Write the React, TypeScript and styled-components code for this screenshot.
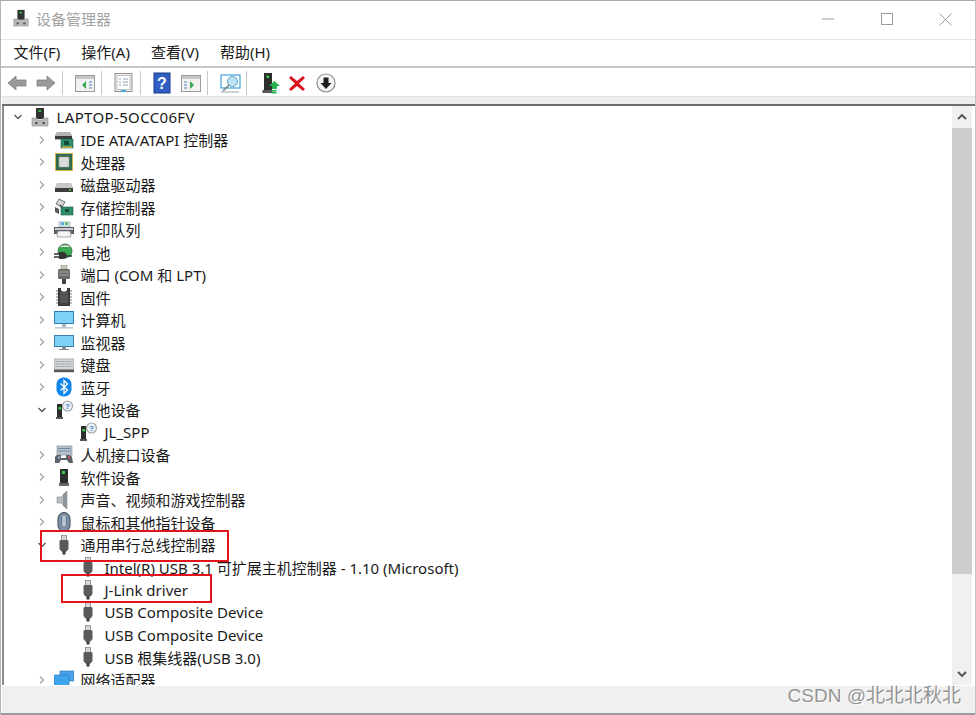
import React from "react";
import styled, { createGlobalStyle } from "styled-components";

const GlobalStyle = createGlobalStyle`
  html, body { margin: 0; padding: 0; background: #fff; }
  body { font-family: "Noto Sans", "Noto Sans CJK SC", sans-serif; color: #1a1a1a; }
  * { box-sizing: border-box; }
`;

const Window = styled.div`
  position: relative;
  width: 976px;
  height: 715px;
  overflow: hidden;
  display: flex;
  flex-direction: column;
  background: #fff;
  border-top: 1px solid #a9a9a9;
  border-left: 1px solid #b5b5b5;
  border-right: 1px solid #c4c4c4;
`;

const TitleBar = styled.div`
  height: 39px;
  flex: none;
  display: flex;
  align-items: center;
  padding: 0 0 4px 11px;
  border-bottom: 1px solid #e6e6e6;
`;

const TitleIcon = styled.div`
  width: 18px;
  height: 18px;
  flex: none;
  margin-right: 6px;
`;

const TitleText = styled.div`
  font-size: 15px;
  color: #a3a3a3;
  flex: 1;
`;

const WinButton = styled.div`
  width: 59px;
  height: 36px;
  margin-top: 2px;
  display: flex;
  align-items: center;
  justify-content: center;
`;

const MenuBar = styled.div`
  height: 28px;
  flex: none;
  display: flex;
  align-items: center;
  padding: 0 0 3px 12.5px;
  gap: 21px;
  font-size: 15px;
  border-bottom: 2px solid #c4c7cc;
`;

const Toolbar = styled.div`
  height: 28px;
  flex: none;
  display: flex;
  align-items: center;
  padding: 2px 0 0 5px;
`;

const ToolIcon = styled.div<{ $w: number; $ml?: number }>`
  width: ${(p) => p.$w}px;
  height: 22px;
  flex: none;
  margin-left: ${(p) => p.$ml ?? 0}px;
`;

const ToolSep = styled.div<{ $ml: number }>`
  width: 1px;
  height: 24px;
  flex: none;
  margin-left: ${(p) => p.$ml}px;
  background: #c9c9c9;
`;

const GreyStrip = styled.div`
  height: 10px;
  flex: none;
  background: #eeeeee;
  border-top: 1px solid #e4e4e4;
  border-bottom: 2px solid #6d6d6d;
  margin-left: 1px;
`;

const Content = styled.div`
  flex: 1;
  min-height: 0;
  display: flex;
  margin-left: 1px;
  margin-right: 3px;
  border-left: 2px solid #8c8c8c;
`;

const Tree = styled.div`
  flex: 1;
  min-width: 0;
  overflow: hidden;
  display: grid;
  grid-auto-rows: 22.5px;
`;

const Row = styled.div<{ $level: number }>`
  display: flex;
  align-items: center;
  height: 22.5px;
  padding-left: ${(p) => 6.5 + p.$level * 24}px;
  font-size: 15px;
  white-space: nowrap;
  letter-spacing: ${(p) => (p.$level === 0 ? "0.35px" : "0")};
`;

const Chevron = styled.div`
  width: 14px;
  height: 14px;
  flex: none;
  display: flex;
  align-items: center;
  justify-content: center;
`;

const RowIcon = styled.div`
  width: 20px;
  height: 20px;
  flex: none;
  margin-left: 5.5px;
  margin-right: 6.5px;
`;

const Scrollbar = styled.div`
  width: 20px;
  flex: none;
  background: #f0f0f0;
  display: flex;
  flex-direction: column;
`;

const ScrollBtn = styled.div`
  height: 22px;
  flex: none;
  display: flex;
  align-items: center;
  justify-content: center;
`;

const Thumb = styled.div`
  height: 446px;
  flex: none;
  background: #cdcdcd;
`;

const ScrollGap = styled.div`
  flex: 1;
`;

const StatusBar = styled.div`
  height: 28px;
  flex: none;
  background: #f0f0f0;
  border-top: 1px solid #fff;
  margin-left: 1px;
`;

const BottomEdge = styled.div`
  height: 2px;
  flex: none;
  background: #9a9a9a;
`;

const RedBox = styled.div<{ $l: number; $t: number; $w: number; $h: number }>`
  position: absolute;
  left: ${(p) => p.$l}px;
  top: ${(p) => p.$t}px;
  width: ${(p) => p.$w}px;
  height: ${(p) => p.$h}px;
  border: 2px solid #e3131b;
`;

const Watermark = styled.div`
  position: absolute;
  right: 14px;
  top: 679px;
  font-family: "Liberation Sans", "Noto Sans CJK SC", sans-serif;
  font-size: 19px;
  color: #949494;
  text-shadow: 1px 1px 0 #fff;
  white-space: nowrap;
`;

const icon = (body: React.ReactNode, vb = "0 0 20 20") => (
  <svg width="100%" height="100%" viewBox={vb} style={{ display: "block" }}>
    {body}
  </svg>
);

const pc = icon(
  <>
    <rect x="6" y="1" width="8" height="11" fill="#333" />
    <rect x="8.5" y="3" width="2.5" height="2" fill="#33c24d" />
    <path d="M2 11h5v2h6v-2h5v8H2z" fill="#b9b9b9" stroke="#8e8e8e" strokeWidth=".6" />
    <rect x="5" y="15" width="2.5" height="2" fill="#555" />
    <rect x="12.5" y="15" width="2.5" height="2" fill="#555" />
  </>
);

const ide = icon(
  <>
    <path d="M1 5l2-3h13l2 3v5H1z" fill="#b4b4b4" />
    <rect x="1" y="6" width="17" height="3" fill="#3b3b3b" />
    <rect x="7" y="9" width="12" height="9" fill="#2f8f6b" stroke="#1d5e48" strokeWidth=".6" />
    <rect x="10" y="11" width="5" height="4" fill="#184a3a" />
    <rect x="8" y="16.5" width="10" height="1.5" fill="#d0aa40" />
  </>
);

const cpu = icon(
  <>
    <rect x="1" y="1" width="18" height="18" fill="#d6b24f" />
    <rect x="2" y="2" width="16" height="16" fill="#2f6a4b" />
    <rect x="5" y="5" width="10" height="10" fill="#d9dcd9" stroke="#9fa8a2" strokeWidth=".6" />
  </>
);

const disk = icon(
  <>
    <path d="M3 8h14l2 4v5H1v-5z" fill="#c6c6c6" />
    <rect x="1" y="13" width="18" height="4" fill="#3c3c3c" />
    <rect x="15" y="14" width="2" height="1.5" fill="#50d060" />
  </>
);

const storage = icon(
  <>
    <path d="M5 2l6 3-3 5-6-3z" fill="#d5d5d5" stroke="#555" strokeWidth=".8" />
    <path d="M1 10l4 2v5l-4-2z" fill="#555" />
    <path d="M6 8l3 3" stroke="#444" strokeWidth="1.2" />
    <rect x="7" y="10" width="12" height="8" fill="#2f8f6b" stroke="#1d5e48" strokeWidth=".6" />
    <rect x="11" y="12" width="4" height="3" fill="#184a3a" />
  </>
);

const printer = icon(
  <>
    <rect x="5" y="2" width="11" height="5" fill="#dfe9f2" stroke="#888" strokeWidth=".6" />
    <rect x="7" y="2.5" width="3" height="2.5" fill="#3fa9e0" />
    <rect x="11" y="2.5" width="3" height="2.5" fill="#4fc060" />
    <path d="M0 7h20v7h-3l-1-3H4l-1 3H0z" fill="#5a5f66" />
    <rect x="1" y="8" width="18" height="2" fill="#c8ccd0" />
    <path d="M4 11h12l1 6H3z" fill="#f4f4f4" stroke="#777" strokeWidth=".6" />
  </>
);

const battery = icon(
  <>
    <circle cx="11" cy="9" r="7" fill="#3aaa50" stroke="#2a6d3c" strokeWidth=".8" />
    <path d="M5 5a7 4 0 0 1 12 0" fill="#e6e6e6" stroke="#888" strokeWidth=".6" />
    <path d="M0 12h5M0 15h5" stroke="#333" strokeWidth="1.4" />
    <path d="M5 10h4a3 3 0 0 1 0 7H5z" fill="#333" />
    <path d="M11 14h7" stroke="#333" strokeWidth="1.5" />
  </>
);

const port = icon(
  <>
    <rect x="7" y="0" width="6" height="4" fill="#c9c9b8" stroke="#888" strokeWidth=".5" />
    <rect x="4" y="4" width="12" height="10" rx="1.5" fill="#6b6b6b" />
    <path d="M5 7h10M5 10h10" stroke="#a9a9a9" strokeWidth="1" />
    <rect x="8" y="14" width="4" height="5" fill="#444" />
  </>
);

const firmware = icon(
  <>
    <path d="M4 1h3v1.5a3 2 0 0 0 6 0V1h3v18H4z" fill="#3d3d3d" />
    <path d="M2 4h2M2 7h2M2 10h2M2 13h2M2 16h2M16 4h2M16 7h2M16 10h2M16 13h2M16 16h2" stroke="#777" strokeWidth="1.2" />
    <rect x="6" y="5" width="8" height="11" fill="#555" />
  </>
);

const computer = icon(
  <>
    <rect x="0" y="1" width="20" height="13" fill="#2f7fb5" />
    <rect x="1" y="2" width="18" height="11" fill="#7fd0f5" />
    <rect x="8" y="14" width="4" height="3" fill="#aab4bc" />
    <rect x="1" y="17" width="18" height="1.6" fill="#c3ccd3" />
  </>
);

const monitor = icon(
  <>
    <rect x="0" y="3" width="20" height="12" fill="#3a7da8" />
    <rect x="1" y="4" width="18" height="10" fill="#7fd0f5" />
    <rect x="8" y="15" width="4" height="2" fill="#8a939a" />
    <rect x="5" y="17" width="10" height="1" fill="#7b8288" />
  </>
);

const keyboard = icon(
  <>
    <rect x="0" y="4" width="20" height="13" fill="#d4d6d8" stroke="#8a8a8a" strokeWidth=".6" />
    <path d="M1.5 6.5h17M1.5 9h17M1.5 11.5h17" stroke="#9a9da0" strokeWidth="1.2" strokeDasharray="1.3 .5" />
    <rect x="0" y="14.5" width="20" height="2.5" fill="#55585c" />
  </>
);

const bluetooth = icon(
  <>
    <rect x="2.5" y="0.5" width="15" height="19" rx="7" fill="#0f86ee" />
    <path d="M6.5 6.5l7 6.5-3.5 3.5V3.500l3.500 3.500-7 6.500" fill="none" stroke="#fff" strokeWidth="1.3" />
  </>
);

const other = icon(
  <>
    <path d="M3 4h5v13H3z" fill="#2e2e2e" />
    <path d="M2 17h7v2H2z" fill="#555" />
    <rect x="4.500" y="7" width="2.500" height="2.500" fill="#33d14d" />
    <circle cx="13.500" cy="6" r="5" fill="#eef3f8" stroke="#a5a5a5" strokeWidth="1.200" />
    <text x="13.500" y="8.800" fontSize="8" fontWeight="700" textAnchor="middle" fill="#3a7fc5" fontFamily="Liberation Sans, sans-serif">?</text>
  </>
);

const hid = icon(
  <>
    <rect x="3" y="1" width="15" height="9" fill="#b9c2cc" stroke="#7d8893" strokeWidth=".6" />
    <path d="M4.500 3.500h12M4.500 6h12" stroke="#4a6f95" strokeWidth="1.200" strokeDasharray="1.300 .6" />
    <path d="M1 12a3 3 0 0 1 3-2h3v3h5v-3h3a3 3 0 0 1 3 2l1 6h-4l-2-3H7l-2 3H1z" fill="#5d6167" />
    <circle cx="15" cy="12" r="1.200" fill="#c85a5a" />
    <circle cx="5" cy="12.500" r="1.200" fill="#8fb3d4" />
  </>
);

const software = icon(
  <>
    <rect x="6" y="2" width="8" height="14" fill="#2e2e2e" />
    <rect x="5" y="16" width="10" height="3" fill="#666" />
    <rect x="8" y="4" width="3" height="3" fill="#33d14d" />
  </>
);

const sound = icon(
  <>
    <path d="M3 7h4l6-6v18l-6-6H3z" fill="#b8bcc0" stroke="#8a8e92" strokeWidth=".6" />
    <path d="M9 4l4-3v18l-4-3z" fill="#8f9499" />
  </>
);

const mouse = icon(
  <>
    <rect x="4" y="0.500" width="12" height="19" rx="6" fill="#7e92ab" stroke="#3b4654" strokeWidth="1" />
    <rect x="7.500" y="2.500" width="5" height="13" rx="2.500" fill="#b4c0cf" stroke="#4c5868" strokeWidth=".6" />
  </>
);

const usb = icon(
  <>
    <rect x="7.500" y="0.500" width="5" height="5" fill="#d5d5d5" stroke="#7d7d7d" strokeWidth=".7" />
    <path d="M5.500 6a1.500 1.500 0 0 1 1.500-1h6a1.500 1.500 0 0 1 1.500 1v8l-2 2.500h-5l-2-2.500z" fill="#5a5a5a" />
    <rect x="8.500" y="16" width="3" height="3.500" fill="#3b3b3b" />
  </>
);

const network = icon(
  <>
    <rect x="6" y="1" width="14" height="10" fill="#4aa3e8" stroke="#2a70ad" strokeWidth=".6" />
    <rect x="0" y="5" width="15" height="12" fill="#3fa4ee" stroke="#1f74ba" strokeWidth=".6" />
  </>
);

type RowData = { level: number; label: string; icon: React.ReactNode; open?: boolean; leaf?: boolean };

const rows: RowData[] = [
  { level: 0, label: "LAPTOP-5OCC06FV", icon: pc, open: true },
  { level: 1, label: "IDE ATA/ATAPI 控制器", icon: ide },
  { level: 1, label: "处理器", icon: cpu },
  { level: 1, label: "磁盘驱动器", icon: disk },
  { level: 1, label: "存储控制器", icon: storage },
  { level: 1, label: "打印队列", icon: printer },
  { level: 1, label: "电池", icon: battery },
  { level: 1, label: "端口 (COM 和 LPT)", icon: port },
  { level: 1, label: "固件", icon: firmware },
  { level: 1, label: "计算机", icon: computer },
  { level: 1, label: "监视器", icon: monitor },
  { level: 1, label: "键盘", icon: keyboard },
  { level: 1, label: "蓝牙", icon: bluetooth },
  { level: 1, label: "其他设备", icon: other, open: true },
  { level: 2, label: "JL_SPP", icon: other, leaf: true },
  { level: 1, label: "人机接口设备", icon: hid },
  { level: 1, label: "软件设备", icon: software },
  { level: 1, label: "声音、视频和游戏控制器", icon: sound },
  { level: 1, label: "鼠标和其他指针设备", icon: mouse },
  { level: 1, label: "通用串行总线控制器", icon: usb, open: true },
  { level: 2, label: "Intel(R) USB 3.1 可扩展主机控制器 - 1.10 (Microsoft)", icon: usb, leaf: true },
  { level: 2, label: "J-Link driver", icon: usb, leaf: true },
  { level: 2, label: "USB Composite Device", icon: usb, leaf: true },
  { level: 2, label: "USB Composite Device", icon: usb, leaf: true },
  { level: 2, label: "USB 根集线器(USB 3.0)", icon: usb, leaf: true },
  { level: 1, label: "网络适配器", icon: network },
];

const arrow = (dir: "l" | "r") =>
  icon(
    <path
      d={dir === "l" ? "M1 11l8-7v4h10v6H9v4z" : "M19 11l-8-7v4H1v6h10v4z"}
      fill="#9a9a9a"
      stroke="#7d7d7d"
      strokeWidth=".8"
    />,
    "0 0 20 22"
  );

const panel = (right: boolean) =>
  icon(
    <>
      <rect x="0.500" y="3.500" width="19" height="16" fill="#f2f2f2" stroke="#9b9b9b" />
      <rect x="1" y="4" width="18" height="3" fill="#c4c8cc" />
      <path d={right ? "M3 10h3M3 13h3M3 16h3" : "M14 10h3M14 13h3M14 16h3"} stroke="#4f86bd" strokeWidth="1.200" />
      <path d={right ? "M9 9l4 4-4 4z" : "M11 9l-4 4 4 4z"} fill="#34a853" />
    </>,
    "0 0 20 22"
  );

const Toolbuttons = () => (
  <>
    <ToolIcon $w={20} $ml={1}>{arrow("l")}</ToolIcon>
    <ToolIcon $w={20} $ml={9}>{arrow("r")}</ToolIcon>
    <ToolSep $ml={6} />
    <ToolIcon $w={20} $ml={12}>{panel(false)}</ToolIcon>
    <ToolSep $ml={6} />
    <ToolIcon $w={20} $ml={12}>
      {icon(
        <>
          <rect x="1" y="1.500" width="17" height="18" fill="#f0f0f0" stroke="#8f8f8f" />
          <rect x="3" y="3.500" width="13" height="14" fill="#fff" stroke="#c0c0c0" />
          <path d="M5 7h2M9 7h5M5 10h2M9 10h5M5 13h2M9 13h5" stroke="#8aa0b5" />
          <rect x="7" y="18" width="5" height="2" fill="#3fa9e0" />
        </>,
        "0 0 20 22"
      )}
    </ToolIcon>
    <ToolSep $ml={6} />
    <ToolIcon $w={18} $ml={12}>
      {icon(
        <>
          <rect x="1" y="1" width="16" height="20" fill="#2f5fc4" stroke="#1b3a85" />
          <text x="9" y="17" fontSize="16" fontWeight="700" textAnchor="middle" fill="#fff" fontFamily="Liberation Sans, sans-serif">?</text>
        </>,
        "0 0 18 22"
      )}
    </ToolIcon>
    <ToolIcon $w={20} $ml={10}>{panel(true)}</ToolIcon>
    <ToolSep $ml={6} />
    <ToolIcon $w={21} $ml={12}>
      {icon(
        <>
          <rect x="1" y="3" width="19" height="13" fill="#fff" stroke="#3fa0d8" strokeWidth="1.200" />
          <circle cx="12.500" cy="9.500" r="5" fill="#bfe3f5" stroke="#5a9fc5" />
          <path d="M9 13l-6 6" stroke="#7a7a7a" strokeWidth="1.500" />
          <path d="M1 20h18" stroke="#a8b4bc" strokeWidth="1.200" />
        </>,
        "0 0 21 22"
      )}
    </ToolIcon>
    <ToolSep $ml={5} />
    <ToolIcon $w={18} $ml={15}>
      {icon(
        <>
          <rect x="2" y="1" width="8" height="17" fill="#2e2e2e" />
          <rect x="0.500" y="18" width="10" height="3" fill="#555" />
          <rect x="4.500" y="3.500" width="2.500" height="2.500" fill="#33d14d" />
          <path d="M12.500 9l5.500 5h-3v3h-5v-3H7z" fill="#22b14c" />
          <rect x="9.500" y="18" width="5" height="1.500" fill="#22b14c" />
          <rect x="9.500" y="20" width="5" height="1.500" fill="#22b14c" />
        </>,
        "0 0 18 22"
      )}
    </ToolIcon>
    <ToolIcon $w={16} $ml={9}>
      {icon(<path d="M2 4l6 5 6-5 2 2-6 5.500 6 5.500-2 2-6-5-6 5-2-2 6-5.500L0 6z" fill="#d9141e" />, "0 0 16 22")}
    </ToolIcon>
    <ToolIcon $w={20} $ml={11}>
      {icon(
        <>
          <circle cx="10" cy="11" r="9" fill="#f7f7f7" stroke="#8a8a8a" strokeWidth="1.200" />
          <path d="M7.500 5.500h5V11h3l-5.500 6-5.500-6h3z" fill="#1c1c1c" />
        </>,
        "0 0 20 22"
      )}
    </ToolIcon>
  </>
);

const ChevronIcon = ({ open }: { open?: boolean }) => (
  <svg width="10" height="10" viewBox="0 0 10 10">
    <path
      d={open ? "M1.500 3l3.500 3.500L8.500 3" : "M3 1.500L6.500 5 3 8.500"}
      fill="none"
      stroke={open ? "#555" : "#a6a6a6"}
      strokeWidth="1.300"
    />
  </svg>
);

const ScrollChevron = ({ up }: { up?: boolean }) => (
  <svg width="10" height="8" viewBox="0 0 10 8">
    <path d={up ? "M1 6l4-4 4 4" : "M1 2l4 4 4-4"} fill="none" stroke="#505050" strokeWidth="1.800" />
  </svg>
);

export default function App() {
  return (
    <>
      <GlobalStyle />
      <Window>
        <TitleBar>
          <TitleIcon>{pc}</TitleIcon>
          <TitleText>设备管理器</TitleText>
          <WinButton>
            <svg width="12" height="2" viewBox="0 0 12 2"><path d="M0 1h12" stroke="#a0a0a0" /></svg>
          </WinButton>
          <WinButton>
            <svg width="12" height="12" viewBox="0 0 12 12"><rect x=".5" y=".5" width="11" height="11" fill="none" stroke="#9a9a9a" /></svg>
          </WinButton>
          <WinButton>
            <svg width="13" height="13" viewBox="0 0 13 13"><path d="M.5.500l12 12M12.500.500l-12 12" stroke="#9a9a9a" /></svg>
          </WinButton>
        </TitleBar>
        <MenuBar>
          <span>文件(F)</span>
          <span>操作(A)</span>
          <span>查看(V)</span>
          <span>帮助(H)</span>
        </MenuBar>
        <Toolbar>
          <Toolbuttons />
        </Toolbar>
        <GreyStrip />
        <Content>
          <Tree>
            {rows.map((r, i) => (
              <Row key={i} $level={r.level}>
                <Chevron>{!r.leaf && <ChevronIcon open={r.open} />}</Chevron>
                <RowIcon>{r.icon}</RowIcon>
                <span>{r.label}</span>
              </Row>
            ))}
          </Tree>
          <Scrollbar>
            <ScrollBtn><ScrollChevron up /></ScrollBtn>
            <Thumb />
            <ScrollGap />
            <ScrollBtn><ScrollChevron /></ScrollBtn>
          </Scrollbar>
        </Content>
        <StatusBar />
        <BottomEdge />
        <RedBox $l={39} $t={529} $w={189} $h={32} />
        <RedBox $l={60} $t={573} $w={151} $h={29} />
        <Watermark>CSDN @北北北秋北</Watermark>
      </Window>
    </>
  );
}
